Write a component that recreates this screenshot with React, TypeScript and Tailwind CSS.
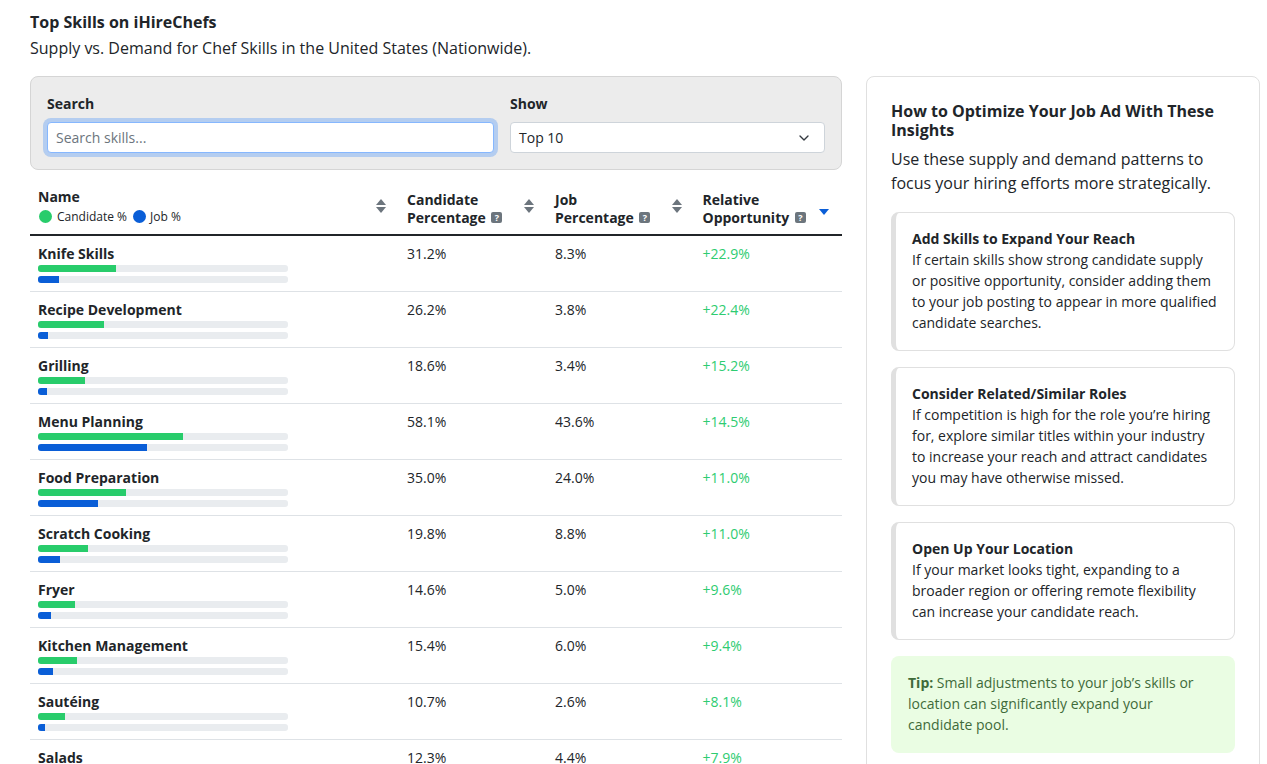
import { ChevronDown } from "lucide-react";

const skills = [
  { name: "Knife Skills", candidate: 31.2, job: 8.3, diff: "+22.9%" },
  { name: "Recipe Development", candidate: 26.2, job: 3.8, diff: "+22.4%" },
  { name: "Grilling", candidate: 18.6, job: 3.4, diff: "+15.2%" },
  { name: "Menu Planning", candidate: 58.1, job: 43.6, diff: "+14.5%" },
  { name: "Food Preparation", candidate: 35.0, job: 24.0, diff: "+11.0%" },
  { name: "Scratch Cooking", candidate: 19.8, job: 8.8, diff: "+11.0%" },
  { name: "Fryer", candidate: 14.6, job: 5.0, diff: "+9.6%" },
  { name: "Kitchen Management", candidate: 15.4, job: 6.0, diff: "+9.4%" },
  { name: "Sautéing", candidate: 10.7, job: 2.6, diff: "+8.1%" },
  { name: "Salads", candidate: 12.3, job: 4.4, diff: "+7.9%" },
];

const tips = [
  {
    title: "Add Skills to Expand Your Reach",
    body: "If certain skills show strong candidate supply or positive opportunity, consider adding them to your job posting to appear in more qualified candidate searches.",
  },
  {
    title: "Consider Related/Similar Roles",
    body: "If competition is high for the role you’re hiring for, explore similar titles within your industry to increase your reach and attract candidates you may have otherwise missed.",
  },
  {
    title: "Open Up Your Location",
    body: "If your market looks tight, expanding to a broader region or offering remote flexibility can increase your candidate reach.",
  },
];

function SortIcon() {
  return (
    <svg width="10" height="14" viewBox="0 0 10 14" className="shrink-0 fill-[#6c757d]">
      <path d="M5 0 L10 6 L0 6 Z" />
      <path d="M0 8 L10 8 L5 14 Z" />
    </svg>
  );
}

function SortedIcon() {
  return (
    <svg width="10" height="6" viewBox="0 0 10 6" className="mt-[13px] shrink-0 fill-[#0a5ed7]">
      <path d="M0 0 L10 0 L5 6 Z" />
    </svg>
  );
}

function HelpIcon() {
  return (
    <span className="relative -top-[1px] ml-[2px] inline-flex size-[11px] items-center justify-center rounded-[2px] bg-[#6c757d] align-middle text-[9px] font-bold leading-none text-white">
      ?
    </span>
  );
}

function HeadCell({ first, second, sorted, inset = "pl-2" }: { first: string; second: string; sorted?: boolean; inset?: string }) {
  return (
    <div className={`flex items-center justify-between pr-[13px] ${inset}`}>
      <div className="pt-[13px] text-sm font-bold leading-[18px]">
        {first}
        <br />
        {second} <HelpIcon />
      </div>
      <div className="pt-[7px]">{sorted ? <SortedIcon /> : <SortIcon />}</div>
    </div>
  );
}

function Bar({ value, color }: { value: number; color: string }) {
  return (
    <div className="h-[7px] w-[250px] overflow-hidden rounded-[3px] bg-[#e9ecef]">
      <div className={`h-full ${color}`} style={{ width: `${value}%` }} />
    </div>
  );
}

export default function App() {
  return (
    <div className="h-screen overflow-hidden bg-white pl-[30px] pr-[7px] pt-[10px] font-['Open_Sans',sans-serif] text-[#212529]">
      <div className="grid grid-cols-[812px_394px] gap-x-6">
        <div>
          <h2 className="text-base font-bold leading-6">Top Skills on iHireChefs</h2>
          <p className="mb-4 mt-[2px] text-base leading-6">
            Supply vs. Demand for Chef Skills in the United States (Nationwide).
          </p>

          <div className="grid grid-cols-[447px_315px] gap-x-4 rounded-lg border border-[#d5d5d5] bg-[#ececec] p-4">
            <div>
              <label className="mb-2 block text-sm font-bold leading-[21px]">Search</label>
              <input
                placeholder="Search skills..."
                className="h-[31px] w-full rounded-[4px] border border-[#86b7fe] bg-white px-2 text-sm text-[#212529] shadow-[0_0_0_4px_rgba(13,110,253,0.25)] outline-none placeholder:text-[#6c757d]"
              />
            </div>
            <div>
              <label className="mb-2 block text-sm font-bold leading-[21px]">Show</label>
              <div className="flex h-[31px] items-center justify-between rounded-[4px] border border-[#ced4da] bg-white pl-2 pr-3 text-sm">
                Top 10
                <ChevronDown className="size-4 text-[#343a40]" strokeWidth={2} />
              </div>
            </div>
          </div>

          <div className="grid h-[66px] grid-cols-[369px_148px_148px_147px] border-b-2 border-[#212529]">
            <div className="flex items-center justify-between pl-2 pr-[13px]">
              <div className="pt-[7px]">
                <div className="text-sm font-bold leading-[21px]">Name</div>
                <div className="mt-[1px] flex items-center text-xs leading-[18px] text-[#212529]">
                  <span className="ml-[1px] mr-[5px] size-[13px] rounded-full bg-[#28cc6b]" />
                  Candidate %
                  <span className="ml-[6px] mr-[4px] size-[13px] rounded-full bg-[#0a5ed7]" />
                  Job %
                </div>
              </div>
              <div className="pt-[7px]">
                <SortIcon />
              </div>
            </div>
            <HeadCell first="Candidate" second="Percentage" />
            <HeadCell first="Job" second="Percentage" />
            <HeadCell first="Relative" second="Opportunity" sorted inset="pl-[7.5px]" />
          </div>

          {skills.map((s) => (
            <div
              key={s.name}
              className="grid h-14 grid-cols-[369px_148px_148px_147px] border-b border-[#dee2e6] pt-[7px] text-sm leading-[21px]"
            >
              <div className="pl-2">
                <div className="mb-[1px] font-bold">{s.name}</div>
                <div className="flex flex-col gap-1">
                  <Bar value={s.candidate} color="bg-[#28cc6b]" />
                  <Bar value={s.job} color="bg-[#0a5ed7]" />
                </div>
              </div>
              <div className="pl-2">{s.candidate.toFixed(1)}%</div>
              <div className="pl-2">{s.job.toFixed(1)}%</div>
              <div className="pl-[7.5px] text-[#2ecc71]">{s.diff}</div>
            </div>
          ))}
        </div>

        <aside className="mt-[66px] self-start rounded-lg border border-[#e0e0e0] px-6 pb-6 pt-[25px]">
          <h3 className="text-base font-bold leading-[19px]">How to Optimize Your Job Ad With These Insights</h3>
          <p className="mb-[17px] mt-[7px] text-base leading-6">
            Use these supply and demand patterns to focus your hiring efforts more strategically.
          </p>
          <div className="flex flex-col gap-4">
            {tips.map((t) => (
              <div
                key={t.title}
                className="rounded-lg border border-l-[5px] border-[#e0e0e0] pb-[17px] pl-4 pr-4 pt-[15px] text-sm leading-[21px]"
              >
                <div className="font-bold">{t.title}</div>
                <p>{t.body}</p>
              </div>
            ))}
            <div className="rounded-lg bg-[#eafde3] px-[17px] pb-[18px] pt-4 text-sm leading-[21px] text-[#3f6b3a]">
              <b>Tip:</b> Small adjustments to your job’s skills or location can significantly expand your candidate pool.
            </div>
          </div>
        </aside>
      </div>
    </div>
  );
}
